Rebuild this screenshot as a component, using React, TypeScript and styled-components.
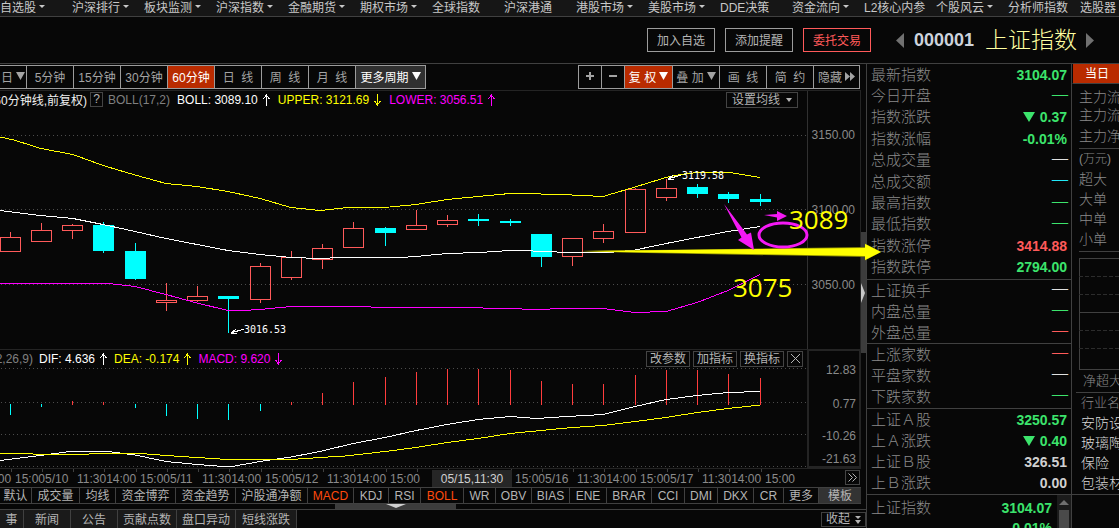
import React from "react";
import styled, { createGlobalStyle, css } from "styled-components";

const line = "#404040";
const faint = "#242424";
const grey = "#8a8a8a";
const light = "#b4b4b4";
const green = "#3ce46c";
const red = "#ff5a5a";
const hot = "#b92b00";
const cyan = "#00ffff";
const magenta = "#ff00ff";
const yellow = "#ffff00";

const GlobalStyle = createGlobalStyle`
  * { box-sizing: border-box; }
  body {
    margin: 0;
    overflow: hidden;
    background: #070707;
    color: ${light};
    font-family: "Liberation Sans", "Noto Sans CJK SC", sans-serif;
    font-size: 12px;
  }
  button {
    margin: 0;
    padding: 0;
    border: 0;
    background: none;
    color: inherit;
    font: inherit;
    white-space: nowrap;
  }
`;

const Page = styled.div`
  display: flex;
  flex-direction: column;
  height: 100vh;
  overflow: hidden;
`;

const Menu = styled.nav`
  display: flex;
  flex: none;
  height: 17px;
  overflow: hidden;
  background: #161616;
  border-bottom: 1px solid ${line};
`;

const MenuLink = styled.a`
  display: flex;
  align-items: center;
  flex: none;
  gap: 3px;
  width: 72px;
  height: 13px;
  color: #c8c8c8;
  text-decoration: none;
  white-space: nowrap;
`;

const Header = styled.header`
  display: flex;
  flex: none;
  align-items: center;
  justify-content: flex-end;
  height: 47px;
  padding-right: 25px;
  border-bottom: 1px solid ${line};
`;

const Actions = styled.div`
  display: flex;
  gap: 10px;
  margin-right: 25px;
`;

const ActionButton = styled.button<{ $accent?: boolean }>`
  width: 68px;
  height: 24px;
  padding-bottom: 2px;
  border: 1px solid ${(p) => (p.$accent ? red : "#9c9c9c")};
  color: ${(p) => (p.$accent ? red : light)};
`;

const StepButton = styled.button`
  display: flex;
  width: 8px;
`;

const Code = styled.span`
  margin: 0 11px 0 10px;
  color: #cdd3dc;
  font-size: 18px;
  font-weight: bold;
`;

const Title = styled.h1`
  width: 91px;
  margin: 0 10px 0 0;
  color: #ffffa0;
  font-size: 23px;
  font-weight: 300;
  line-height: 30px;
  white-space: nowrap;
`;

const Main = styled.main`
  display: flex;
  flex: 1;
  min-height: 0;
`;

const ChartColumn = styled.section`
  position: relative;
  z-index: 1;
  display: flex;
  flex: 1;
  flex-direction: column;
  min-width: 0;
`;

const Toolbar = styled.div`
  display: flex;
  flex: none;
  justify-content: space-between;
  height: 26px;
  padding: 1px 6px 0 0;
`;

const ToolGroup = styled.div`
  display: flex;
`;

const Tool = styled.button<{ $w: number; $tone?: "hot" | "raised"; $first?: boolean }>`
  display: flex;
  align-items: center;
  justify-content: center;
  gap: 3px;
  width: ${(p) => p.$w}px;
  height: 24px;
  padding-bottom: 2px;
  border: 1px solid #9c9c9c;
  border-left-width: ${(p) => (p.$first ? 1 : 0)}px;
  color: #a4a4a4;
  white-space: pre;
  ${(p) => p.$tone === "hot" && css`background: ${hot}; color: #fff;`}
  ${(p) => p.$tone === "raised" && css`background: #303030; color: #fff;`}
`;

const ChartBody = styled.div`
  display: flex;
  flex: none;
`;

const Panels = styled.div`
  flex: 1;
  min-width: 0;
`;

const Panel = styled.div<{ $h: number }>`
  display: flex;
  height: ${(p) => p.$h}px;
  border-top: 1px solid ${faint};
`;

const Plot = styled.div`
  flex: 1;
  min-width: 0;
`;

const PlotSvg = styled.svg`
  display: block;
  width: 100%;
`;

const InfoBar = styled.div<{ $h: number; $lift?: number }>`
  display: flex;
  align-items: center;
  justify-content: space-between;
  height: ${(p) => p.$h}px;
  padding-bottom: ${(p) => p.$lift ?? 0}px;
  overflow: hidden;
`;

const Readings = styled.div<{ $gap: number }>`
  display: flex;
  align-items: center;
  gap: ${(p) => p.$gap}px;
  white-space: nowrap;
`;

const Scope = styled.span<{ $w: number; $color: string }>`
  display: flex;
  flex: none;
  justify-content: flex-end;
  width: ${(p) => p.$w}px;
  color: ${(p) => p.$color};
`;

const HelpButton = styled.button`
  flex: none;
  width: 13px;
  height: 15px;
  margin: 0 -2px;
  border: 1px solid #444;
  line-height: 13px;
`;

const Reading = styled.span<{ $color: string }>`
  display: flex;
  align-items: center;
  gap: 5px;
  margin-left: 2px;
  color: ${(p) => p.$color};
`;

const PanelActions = styled.div<{ $gap: number }>`
  display: flex;
  gap: 3px;
  padding-right: ${(p) => p.$gap}px;
`;

const PanelButton = styled.button<{ $w: number }>`
  display: flex;
  align-items: center;
  justify-content: center;
  gap: 6px;
  width: ${(p) => p.$w}px;
  height: 16px;
  border: 1px solid #444;
  line-height: 14px;
`;

const PriceAxis = styled.div`
  width: 54px;
  padding: 7px 5px 0 0;
  border-left: 1px solid #303030;
  border-right: 1px solid ${faint};
  color: ${grey};
  line-height: 75px;
  text-align: right;
`;

const ValueAxis = styled.div`
  display: grid;
  grid-template-rows: 37px 31px 33px 14px;
  align-items: center;
  width: 54px;
  border: 2px solid ${faint};
  border-top-width: 1px;
  padding-right: 3px;
  color: ${grey};
  text-align: right;
`;

const Splitter = styled.div`
  display: flex;
  align-items: flex-start;
  width: 5px;
  padding-top: 142px;
`;

const SplitHandle = styled.button`
  display: flex;
  align-items: center;
  width: 5px;
  height: 121px;
  background: #3c3c3c;
`;

const TimeAxis = styled.div`
  display: flex;
  flex: none;
  height: 19px;
  margin-right: 5px;
  border-top: 1px solid ${faint};
`;

const TimeScale = styled.div`
  position: relative;
  flex: 1;
  min-width: 0;
  overflow: hidden;
`;

const TimeLabels = styled.div`
  display: flex;
  justify-content: flex-end;
  color: ${grey};
  line-height: 14px;
`;

const Day = styled.div<{ $w: number }>`
  display: grid;
  flex: none;
  grid-template-columns: 62px 63px;
  width: ${(p) => p.$w}px;
  white-space: nowrap;
`;

const TimeCursor = styled.div`
  position: absolute;
  top: 1px;
  right: 333px;
  width: 80px;
  height: 17px;
  background: #262626;
  color: #d0d0d0;
  line-height: 19px;
  text-align: center;
`;

const MoreButton = styled.button`
  display: flex;
  align-items: center;
  justify-content: center;
  width: 15px;
  height: 15px;
  margin: 1px 1px 0 0;
  border: 1px solid #444;
`;

const IndicatorTabs = styled.div`
  display: flex;
  flex: none;
  height: 17px;
  margin-right: 5px;
  border: solid ${line};
  border-width: 1px 0;
`;

const IndicatorTab = styled.button<{ $w: number; $active?: boolean }>`
  flex: none;
  width: ${(p) => p.$w}px;
  border-right: 1px solid ${line};
  color: ${(p) => (p.$active ? "#ff4a0c" : light)};
  line-height: 16px;
`;

const TemplateTab = styled.button`
  flex: 1;
  background: #333;
  color: ${light};
  line-height: 16px;
`;

const Drawer = styled.div`
  display: flex;
  flex: none;
  height: 6px;
  padding-left: 335px;
  border-bottom: 1px solid ${line};
`;

const DrawerHandle = styled.button`
  display: flex;
  justify-content: center;
  width: 121px;
  height: 5px;
  background: #3c3c3c;
`;

const NewsTabs = styled.div`
  display: flex;
  flex: none;
  height: 20px;
`;

const NewsTab = styled.button<{ $w: number }>`
  flex: none;
  width: ${(p) => p.$w}px;
  border-right: 1px solid ${line};
  background: #1a1a1a;
  line-height: 20px;
`;

const CollapseButton = styled.button`
  display: flex;
  align-items: center;
  justify-content: center;
  gap: 5px;
  width: 45px;
  height: 15px;
  margin: 2px 0 0 auto;
  border: 1px solid ${line};
  line-height: 13px;
`;

const Annotations = styled.svg`
  position: absolute;
  top: 136px;
  right: -15px;
  pointer-events: none;
`;

const Quotes = styled.section`
  flex: none;
  width: 206px;
  border: solid ${line};
  border-width: 0 1px;
`;

const QuoteGroup = styled.dl<{ $h: number }>`
  display: grid;
  grid-auto-rows: 1fr;
  height: ${(p) => p.$h}px;
  margin: 0;
  padding: 0 3px 1px 4px;
  border-bottom: 1px solid ${line};
`;

const QuoteRow = styled.div`
  display: flex;
  align-items: center;
  justify-content: space-between;
  line-height: 20px;
`;

const QuoteLabel = styled.dt`
  color: ${grey};
  font-size: 15px;
  font-weight: 300;
`;

const QuoteValue = styled.dd<{ $color: string }>`
  display: flex;
  align-items: center;
  gap: 5px;
  margin: 0;
  padding-right: 1px;
  color: ${(p) => p.$color};
  font-size: 14px;
  font-weight: bold;
`;

const EmptyValue = styled(QuoteValue)`
  padding: 0 0 5px;
  font-family: "Liberation Serif", serif;
  font-size: 16px;
  font-weight: normal;
  line-height: 16px;
`;

const Ticker = styled.div`
  display: flex;
`;

const TickerList = styled.dl`
  flex: 1;
  margin: 0;
  padding: 3px 4px 0 4px;
`;

const ScrollTrack = styled.div`
  display: flex;
  flex-direction: column;
  align-items: center;
  gap: 5px;
  width: 14px;
  padding-top: 5px;
  background: #1b1b1b;
`;

const ScrollThumb = styled.div`
  width: 10px;
  height: 40px;
  background: #4a4a4a;
`;

const Side = styled.aside`
  flex: none;
  width: 47px;
  overflow: hidden;
  white-space: nowrap;
`;

const SideTab = styled.button`
  display: block;
  width: 100%;
  height: 20px;
  padding: 0 0 2px 12px;
  border-bottom: 1px solid ${line};
  border-left: 1px solid #070707;
  background: ${hot};
  color: #fff;
  text-align: left;
`;

const FlowGroup = styled.div<{ $pad: string }>`
  margin-left: 7px;
  padding: ${(p) => p.$pad};
  border-bottom: 1px solid ${line};
`;

const SideText = styled.div<{ $size: number; $row: number; $bright?: boolean }>`
  color: ${(p) => (p.$bright ? "#d8d8d8" : grey)};
  font-size: ${(p) => p.$size}px;
  font-weight: 300;
  line-height: ${(p) => p.$row}px;
`;

const MiniChart = styled.svg`
  display: block;
  margin: 6px 0 0 7px;
`;

const Industries = styled.div`
  padding: 0 0 1px 9px;
  border-bottom: 1px solid ${line};
`;

const NetRow = styled.div`
  margin-left: 4px;
  padding-left: 7px;
  border-bottom: 1px solid ${line};
`;

const Tri = ({ w, h }: { w: number; h: number }) => (
  <svg width={w} height={h} fill="currentColor" aria-hidden="true">
    <polygon points={`0,0 ${w},0 ${w / 2},${h}`} />
  </svg>
);

const Trend = ({ up }: { up?: boolean }) => (
  <svg width="8" height="12" fill="none" stroke="currentColor" shapeRendering="crispEdges" aria-hidden="true">
    <path d={up ? "M3.5 12V0M0.5 5L3.5 1L6.5 5" : "M3.5 0V12M0.5 7L3.5 11L6.5 7"} />
  </svg>
);

const menu: [string, boolean][] = [
  ["自选股", true], ["沪深排行", true], ["板块监测", true], ["沪深指数", true],
  ["金融期货", true], ["期权市场", true], ["全球指数", false], ["沪深港通", false],
  ["港股市场", true], ["美股市场", true], ["DDE决策", false], ["资金流向", true],
  ["L2核心内参", false], ["个股风云", true], ["分析师指数", false], ["选股器", false],
];

// centre x, body top, body bottom, high, low, rising
const candles: [number, number, number, number, number, boolean][] = [
  [10, 237, 252, 232, 252, true], [41, 230, 242, 223, 242, true],
  [72, 225, 231, 224, 239, true], [103, 225, 251, 222, 253, false],
  [135, 251, 279, 243, 280, false], [166, 300, 303, 283, 311, true],
  [197, 296, 301, 286, 302, true], [228, 296, 299, 296, 333, false],
  [260, 266, 300, 263, 303, true], [291, 257, 278, 251, 280, true],
  [322, 248, 260, 244, 269, true], [353, 228, 248, 222, 248, true],
  [385, 228, 233, 227, 246, false], [416, 225, 230, 210, 230, true],
  [447, 220, 225, 215, 227, true], [478, 219, 221, 214, 226, false],
  [510, 221, 223, 219, 226, false], [541, 234, 257, 234, 267, false],
  [572, 238, 257, 238, 266, true], [603, 231, 239, 224, 243, true],
  [635, 189, 233, 188, 233, true], [666, 188, 198, 179, 201, true],
  [697, 187, 194, 184, 198, false], [728, 194, 199, 192, 203, false],
  [760, 199, 202, 194, 206, false],
];

// centre x, top, bottom, positive
const bars: [number, number, number, boolean][] = [
  [10, 404, 415, false], [41, 404, 407, false], [72, 401, 405, true], [103, 402, 405, true],
  [135, 404, 408, false], [166, 404, 416, false], [197, 404, 419, false], [228, 404, 420, false],
  [260, 404, 411, false], [291, 402, 405, true], [322, 393, 405, true], [353, 382, 405, true],
  [385, 377, 405, true], [416, 372, 405, true], [447, 369, 405, true], [478, 369, 405, true],
  [510, 370, 405, true], [541, 381, 405, true], [572, 384, 405, true], [603, 384, 405, true],
  [635, 375, 405, true], [666, 370, 405, true], [697, 370, 405, true], [728, 374, 405, true],
  [760, 378, 405, true],
];

const upper = "0,137 14,140 41,148.5 73,154.5 103,165.5 135,175 166,183.5 197,186.5 228,191.5 260,198.5 291,207.5 320,210.5 348,207.5 390,207 416,204.5 447,199.5 478,196.5 510,193.5 541,194 572,195 603,196.5 635,187 666,177.5 680,174.5 697,172.5 730,172.5 745,175 760,177.5";
const middle = "0,210.5 40,215.5 73,218.5 103,224.5 135,231.5 166,238.5 197,244.5 228,250.5 260,254.5 291,257.5 320,258.5 340,257.5 400,257.5 416,256.5 447,253.5 480,252.5 510,250.5 525,250.5 541,251.5 572,252.5 609,252.5 635,250 666,243.5 697,237.5 728,231.5 760,226.5";
const lower = "0,283 3,283.5 108,283.5 135,286.5 166,294.5 197,303 228,310.5 243,310.5 260,309.5 291,306.5 370,306.5 372,307.5 463,307.5 541,309.5 560,308.5 603,308.5 635,312.5 666,311.5 697,302.5 728,290.5 745,282 760,274.5";
const dif = "0,460.5 40,455.5 70,451.5 108,451.5 135,455 166,461.5 197,464.5 223,466.5 232,466.5 260,461.5 291,457 320,451.5 353,443.5 385,437.5 416,430.5 447,424.5 478,419.5 510,416.5 537,418.5 567,416.5 603,414.5 635,406.5 666,399.5 697,395.5 728,392.5 760,391.5";
const dea = "0,453.5 25,453.5 40,454.5 140,453.5 166,455.5 197,457.5 228,459.5 291,459.5 320,457.5 345,456 385,451.5 416,447.5 447,442.5 478,438.5 510,433.5 541,430.5 572,427.5 603,425.5 635,421.5 666,417.5 697,412.5 728,408.5 760,405";

const Dots = ({ y }: { y: number }) => (
  <path d={`M1 ${y}.5H807`} stroke="#4c4c4c" strokeDasharray="1 3" />
);

const days: [string, string, number][] = [
  ["", "11:3014:00", 125], ["15:005/10", "11:3014:00", 125], ["15:005/11", "11:3014:00", 125],
  ["15:005/12", "11:3014:00", 125], ["15:00", "", 125], ["15:005/16", "11:3014:00", 125],
  ["15:005/17", "11:3014:00", 125], ["15:00", "", 80],
];

const indicators: [string, number][] = [
  ["默认", 32], ["成交量", 48], ["均线", 36], ["资金博弈", 60], ["资金趋势", 60], ["沪股通净额", 72],
  ["MACD", 46], ["KDJ", 35], ["RSI", 32], ["BOLL", 43], ["WR", 32], ["OBV", 36], ["BIAS", 38],
  ["ENE", 37], ["BRAR", 45], ["CCI", 33], ["DMI", 33], ["DKX", 36], ["CR", 30], ["更多", 35],
];

const news: [string, number][] = [
  ["事", 24], ["新闻", 47], ["公告", 47], ["贡献点数", 59], ["盘口异动", 59], ["短线涨跌", 61],
];

type Quote = { label: string; value: string; color: string; down?: boolean };
const q = (label: string, value: string, color: string, down?: boolean): Quote => ({ label, value, color, down });

const groups: { h: number; rows: Quote[] }[] = [
  {
    h: 216,
    rows: [
      q("最新指数", "3104.07", green), q("今日开盘", "—", green), q("指数涨跌", "0.37", green, true),
      q("指数涨幅", "-0.01%", green), q("总成交量", "—", "#e0e0e0"), q("总成交额", "—", "#22e8f8"),
      q("最高指数", "—", green), q("最低指数", "—", green), q("指数涨停", "3414.88", red),
      q("指数跌停", "2794.00", green),
    ],
  },
  { h: 64, rows: [q("上证换手", "—", "#e0e0e0"), q("内盘总量", "—", green), q("外盘总量", "—", red)] },
  { h: 65, rows: [q("上涨家数", "—", red), q("平盘家数", "—", "#e0e0e0"), q("下跌家数", "—", green)] },
  {
    h: 86,
    rows: [
      q("上证Ａ股", "3250.57", green), q("上Ａ涨跌", "0.40", green, true),
      q("上证Ｂ股", "326.51", "#d0d0d0"), q("上Ｂ涨跌", "0.00", "#d0d0d0"),
    ],
  },
];

const QuoteLine = ({ label, value, color, down }: Quote) => (
  <QuoteRow>
    <QuoteLabel>{label}</QuoteLabel>
    {value === "—" ? (
      <EmptyValue $color={color}>{value}</EmptyValue>
    ) : (
      <QuoteValue $color={color}>
        {down && <Tri w={12} h={10} />}
        {value}
      </QuoteValue>
    )}
  </QuoteRow>
);

const PricePlot = () => (
  <PlotSvg height="239" viewBox="0 110 807 239" preserveAspectRatio="xMaxYMid slice" shapeRendering="crispEdges" fill="none">
    <Dots y={135} />
    <Dots y={209} />
    <Dots y={284} />
    {candles.map(([x, top, bottom, high, low, rising]) =>
      rising ? (
        <g key={x} stroke={red}>
          <path d={`M${x + 0.5} ${high}V${top}M${x + 0.5} ${bottom}V${low}`} />
          <rect x={x - 9.5} y={top + 0.5} width="20" height={bottom - top - 1} />
        </g>
      ) : (
        <g key={x} fill={cyan}>
          <rect x={x} y={high} width="1" height={low - high} />
          <rect x={x - 10} y={top} width="21" height={bottom - top} />
        </g>
      )
    )}
    <polyline points={upper} stroke={yellow} />
    <polyline points={middle} stroke="#fff" />
    <polyline points={lower} stroke={magenta} />
    <g stroke="#fff">
      <path d="M244 329L231 333M236 329L231 333L237 334" />
      <path d="M681 175L668 179M673 175L668 179L674 180" />
    </g>
    <g fill="#fff" fontFamily="DejaVu Sans Mono, monospace" fontSize="10">
      <text x="244" y="333">3016.53</text>
      <text x="682" y="179">3119.58</text>
    </g>
  </PlotSvg>
);

const MacdPlot = () => (
  <PlotSvg height="100" viewBox="0 367 807 100" preserveAspectRatio="xMaxYMid slice" shapeRendering="crispEdges" fill="none">
    {[368, 402, 434, 466].map((y) => <Dots key={y} y={y} />)}
    {bars.map(([x, top, bottom, positive]) => (
      <rect key={x} x={x} y={top} width="1" height={bottom - top} fill={positive ? "#ff3c3c" : cyan} />
    ))}
    <polyline points={dif} stroke="#fff" />
    <polyline points={dea} stroke={yellow} />
  </PlotSvg>
);

export default function App() {
  return (
    <Page>
      <GlobalStyle />
      <Menu>
        {menu.map(([name, drop]) => (
          <MenuLink key={name} href="#">
            {name}
            {drop && <Tri w={6} h={3} />}
          </MenuLink>
        ))}
      </Menu>
      <Header>
        <Actions>
          <ActionButton>加入自选</ActionButton>
          <ActionButton>添加提醒</ActionButton>
          <ActionButton $accent>委托交易</ActionButton>
        </Actions>
        <StepButton aria-label="上一个"><svg width="8" height="15" fill="#707070"><path d="M8 0V15L0 7.5Z" /></svg></StepButton>
        <Code>000001</Code>
        <Title>上证指数</Title>
        <StepButton aria-label="下一个"><svg width="8" height="15" fill="#707070"><path d="M0 0V15L8 7.5Z" /></svg></StepButton>
      </Header>

      <Main>
        <ChartColumn>
          <Toolbar>
            <ToolGroup>
              <Tool $w={27}>日<Tri w={9} h={8} /></Tool>
              <Tool $w={47}>5分钟</Tool>
              <Tool $w={47}>15分钟</Tool>
              <Tool $w={47}>30分钟</Tool>
              <Tool $w={47} $tone="hot">60分钟</Tool>
              <Tool $w={47}>{"日  线"}</Tool>
              <Tool $w={47}>{"周  线"}</Tool>
              <Tool $w={47}>{"月  线"}</Tool>
              <Tool $w={70} $tone="raised">更多周期<Tri w={9} h={8} /></Tool>
            </ToolGroup>
            <ToolGroup>
              <Tool $w={24} $first aria-label="放大"><svg width="8" height="8" fill="currentColor"><path d="M3 0H5V3H8V5H5V8H3V5H0V3H3Z" /></svg></Tool>
              <Tool $w={23} aria-label="缩小"><svg width="8" height="8" fill="currentColor"><path d="M0 3H8V5H0Z" /></svg></Tool>
              <Tool $w={48} $tone="hot">{"复 权"}<Tri w={9} h={8} /></Tool>
              <Tool $w={47}>{"叠 加"}<Tri w={9} h={8} /></Tool>
              <Tool $w={47}>{"画  线"}</Tool>
              <Tool $w={47}>{"简  约"}</Tool>
              <Tool $w={46}>隐藏<svg width="10" height="9" fill="currentColor"><path d="M0 0L5 4.5L0 9ZM5 0L10 4.5L5 9Z" /></svg></Tool>
            </ToolGroup>
          </Toolbar>

          <ChartBody>
            <Panels>
              <Panel $h={259}>
                <Plot>
                  <InfoBar $h={19} $lift={2}>
                    <Readings $gap={5}>
                      <Scope $w={87} $color="#f0f0f0">60分钟线,前复权)</Scope>
                      <HelpButton>?</HelpButton>
                      <Reading $color="#808080">BOLL(17,2)</Reading>
                      <Reading $color="#fff">BOLL: 3089.10<Trend up /></Reading>
                      <Reading $color={yellow}>UPPER: 3121.69<Trend /></Reading>
                      <Reading $color={magenta}>LOWER: 3056.51<Trend up /></Reading>
                    </Readings>
                    <PanelActions $gap={9}>
                      <PanelButton $w={72}>设置均线<Tri w={6} h={4} /></PanelButton>
                    </PanelActions>
                  </InfoBar>
                  <PricePlot />
                </Plot>
                <PriceAxis>
                  <div>3150.00</div>
                  <div>3100.00</div>
                  <div>3050.00</div>
                </PriceAxis>
              </Panel>
              <Panel $h={119}>
                <Plot>
                  <InfoBar $h={17}>
                    <Readings $gap={4}>
                      <Scope $w={33} $color="#808080">2,26,9)</Scope>
                      <Reading $color="#fff">DIF: 4.636<Trend up /></Reading>
                      <Reading $color={yellow}>DEA: -0.174<Trend up /></Reading>
                      <Reading $color={magenta}>MACD: 9.620<Trend /></Reading>
                    </Readings>
                    <PanelActions $gap={4}>
                      <PanelButton $w={44}>改参数</PanelButton>
                      <PanelButton $w={44}>加指标</PanelButton>
                      <PanelButton $w={44}>换指标</PanelButton>
                      <PanelButton $w={16} aria-label="关闭"><svg width="9" height="9" stroke="currentColor"><path d="M0 0L9 9M9 0L0 9" /></svg></PanelButton>
                    </PanelActions>
                  </InfoBar>
                  <MacdPlot />
                </Plot>
                <ValueAxis>
                  <div>12.83</div>
                  <div>0.77</div>
                  <div>-10.26</div>
                  <div>-21.63</div>
                </ValueAxis>
              </Panel>
            </Panels>
            <Splitter>
              <SplitHandle aria-label="收起侧栏"><svg width="4" height="20" fill="#c8c8c8"><path d="M0 0L4 10L0 20Z" /></svg></SplitHandle>
            </Splitter>
          </ChartBody>

          <TimeAxis>
            <TimeScale>
              <PlotSvg height="3" viewBox="0 0 845 3" preserveAspectRatio="xMaxYMid slice" shapeRendering="crispEdges">
                {candles.map(([x]) => <rect key={x} x={x + 1} y="0" width="1" height="3" fill="#404040" />)}
              </PlotSvg>
              <TimeLabels>
                {days.map(([open, rest, w], i) => (
                  <Day key={i} $w={w}><span>{open}</span><span>{rest}</span></Day>
                ))}
              </TimeLabels>
              <TimeCursor>05/15,11:30</TimeCursor>
            </TimeScale>
            <MoreButton aria-label="更多时间"><svg width="9" height="9" fill="none" stroke="currentColor"><path d="M0.5 0.5L4.5 4.5L0.5 8.5M4.5 0.5L8.5 4.5L4.5 8.5" /></svg></MoreButton>
          </TimeAxis>

          <IndicatorTabs>
            {indicators.map(([name, w]) => (
              <IndicatorTab key={name} $w={w} $active={name === "MACD" || name === "BOLL"}>{name}</IndicatorTab>
            ))}
            <TemplateTab>模板</TemplateTab>
          </IndicatorTabs>
          <Drawer>
            <DrawerHandle aria-label="展开"><svg width="20" height="4" fill="#d0d0d0"><path d="M0 0H20L10 4Z" /></svg></DrawerHandle>
          </Drawer>
          <NewsTabs>
            {news.map(([name, w]) => <NewsTab key={name} $w={w}>{name}</NewsTab>)}
            <CollapseButton>收起<svg width="6" height="8" fill="currentColor"><path d="M0 0H6L3 3ZM0 4H6L3 8Z" /></svg></CollapseButton>
          </NewsTabs>

          <Annotations width="301" height="110" viewBox="580 200 301 110">
            <path d="M580 251L865 247V243.500L881 252L865 260.500V257L620 252.500Z" fill="#8c8c00" />
            <path d="M580 251L865 248V244L881 252L865 260V256L620 252Z" fill={yellow} />
            <g fill="#f419f4">
              <path d="M724 204L747 234.500L751 232.500L754 250L738 240L741.500 237.500Z" />
              <path d="M764 215L777 214V211L787 216L777 221V217.500Z" />
            </g>
            <ellipse cx="783" cy="235" rx="24" ry="12" fill="none" stroke="#f419f4" strokeWidth="3" />
            <g fill={yellow} fontFamily="Open Sans, sans-serif" fontSize="26">
              <text x="789" y="229">3089</text>
              <text x="733" y="297">3075</text>
            </g>
          </Annotations>
        </ChartColumn>

        <Quotes>
          {groups.map((group) => (
            <QuoteGroup key={group.h} $h={group.h}>
              {group.rows.map((row) => <QuoteLine key={row.label} {...row} />)}
            </QuoteGroup>
          ))}
          <Ticker>
            <TickerList>
              <QuoteLine label="上证指数" value="3104.07" color={green} />
              <QuoteLine label="" value="-0.01%" color={green} />
            </TickerList>
            <ScrollTrack>
              <svg width="10" height="5" fill="#707070"><path d="M5 0L10 5H0Z" /></svg>
              <ScrollThumb />
            </ScrollTrack>
          </Ticker>
        </Quotes>

        <Side>
          <SideTab>当日</SideTab>
          <FlowGroup $pad="4px 0 0">
            <SideText $size={14} $row={18}>主力流</SideText>
            <SideText $size={14} $row={18}>主力流</SideText>
            <SideText $size={14} $row={24}>主力净</SideText>
          </FlowGroup>
          <FlowGroup $pad="0 0 2px">
            <SideText $size={12} $row={20}>(万元)</SideText>
            <SideText $size={14} $row={20}>超大</SideText>
            <SideText $size={14} $row={20}>大单</SideText>
            <SideText $size={14} $row={20}>中单</SideText>
            <SideText $size={14} $row={20}>小单</SideText>
          </FlowGroup>
          <MiniChart width="100" height="112" fill="none" stroke={line} shapeRendering="crispEdges">
            <path d="M100 0.500H0.500V111.500H100M0 54.500H100" />
            <path d="M0 18.500H100M0 36.500H100M0 72.500H100M0 90.500H100" stroke="#2c2c2c" strokeDasharray="4 2" />
          </MiniChart>
          <NetRow><SideText $size={13} $row={22}>净超大</SideText></NetRow>
          <Industries>
            <SideText $size={13} $row={20}>行业名</SideText>
            <SideText $size={14} $row={20} $bright>安防设</SideText>
            <SideText $size={14} $row={20} $bright>玻璃陶</SideText>
            <SideText $size={14} $row={20} $bright>保险</SideText>
            <SideText $size={14} $row={20} $bright>包装材</SideText>
          </Industries>
        </Side>
      </Main>
    </Page>
  );
}
